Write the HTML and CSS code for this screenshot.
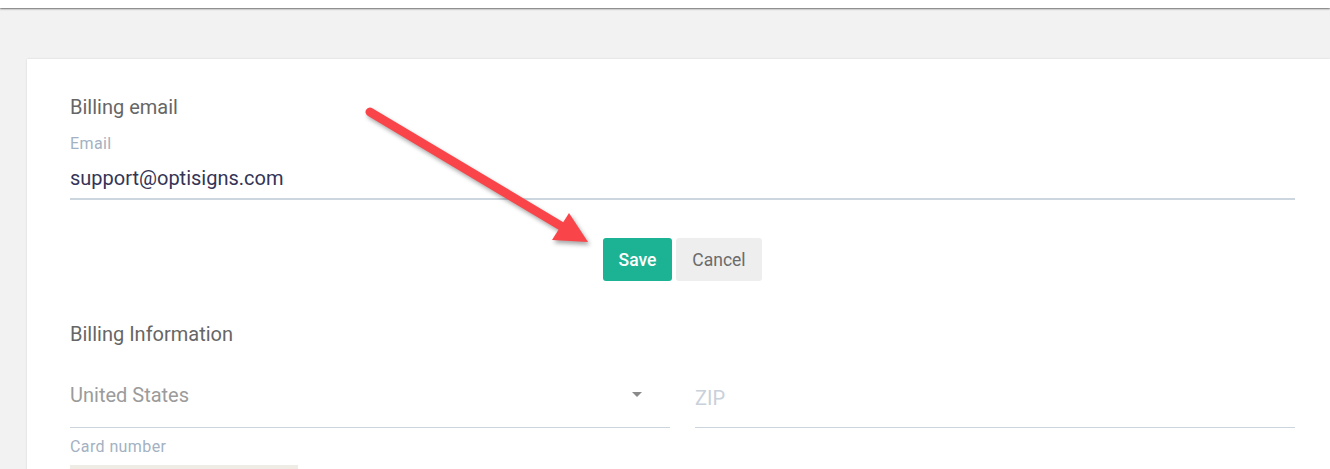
FILE: index.html
```html
<!DOCTYPE html>
<html>
<head>
<meta charset="utf-8">
<link rel="stylesheet" href="styles.css">
</head>
<body>
<header class="topbar"></header>
<main class="page">
  <section class="card">
    <h2 class="section-title">Billing email</h2>
    <div class="field">
      <label class="field-label">Email</label>
      <div class="field-value">support@optisigns.com</div>
    </div>
    <div class="actions">
      <button class="btn btn-save">Save</button>
      <button class="btn btn-cancel">Cancel</button>
    </div>
    <h2 class="section-title info-title">Billing Information</h2>
    <div class="row">
      <div class="select">
        <span class="select-text">United States</span>
        <span class="caret"></span>
      </div>
      <div class="zip">ZIP</div>
    </div>
    <label class="field-label card-label">Card number</label>
    <div class="card-input"></div>
  </section>
</main>
<svg class="annotation" width="1330" height="469" viewBox="0 0 1330 469">
  <g class="arrow">
    <line x1="370" y1="112" x2="566" y2="229" stroke="#f9454a" stroke-width="9" stroke-linecap="round"/>
    <polygon points="588,242 569,213 552,240" fill="#f9454a"/>
  </g>
</svg>
</body>
</html>
```

FILE: styles.css
```css
* { box-sizing: border-box; }
html, body {
  margin: 0;
  padding: 0;
  height: 469px;
  overflow: hidden;
}
body {
  background: #f2f2f2;
  font-family: Roboto, "Liberation Sans", Arial, sans-serif;
  position: relative;
}
.topbar {
  height: 8px;
  background: #ffffff;
  box-shadow: 0 1px 2px rgba(0,0,0,0.55);
  position: relative;
  z-index: 1;
}
.page {
  padding: 51px 0 0 27px;
}
.card {
  background: #ffffff;
  box-shadow: 0 0 2px rgba(0,0,0,0.12);
  padding: 36px 35px 40px 43px;
  min-height: 500px;
}
.section-title {
  margin: 0;
  font-size: 20px;
  line-height: 24px;
  font-weight: 400;
  color: #666666;
}
.field {
  margin-top: 16px;
}
.field-label {
  display: block;
  font-size: 16px;
  letter-spacing: 0.4px;
  line-height: 18px;
  color: #a3b1c2;
}
.field-value {
  margin-top: 13px;
  font-size: 20px;
  line-height: 24px;
  color: #343456;
  padding-bottom: 8px;
  border-bottom: 2px solid #ccd6df;
}
.actions {
  display: flex;
  justify-content: center;
  gap: 4px;
  margin-top: 38px;
}
.btn {
  height: 43px;
  border: none;
  border-radius: 3px;
  font-family: inherit;
  font-size: 17.5px;
  padding: 0;
}
.btn-save {
  width: 69px;
  background: #1cb394;
  color: #ffffff;
  font-weight: 500;
}
.btn-cancel {
  width: 86px;
  background: #eeeeee;
  color: #6b6b6b;
}
.info-title {
  margin-top: 41px;
}
.row {
  display: grid;
  grid-template-columns: 1fr 1fr;
  gap: 25px;
  margin-top: 37px;
}
.select {
  display: flex;
  align-items: center;
  justify-content: space-between;
  height: 45px;
  padding-bottom: 20px;
  border-bottom: 1px solid #ccd5dd;
  font-size: 20px;
  line-height: 24px;
  color: #9b9b9b;
}
.caret {
  width: 0;
  height: 0;
  border-left: 5px solid transparent;
  border-right: 5px solid transparent;
  border-top: 5px solid #8a8a8a;
  margin-right: 28px;
  margin-top: -2px;
}
.zip {
  height: 45px;
  padding-top: 3px;
  border-bottom: 1px solid #ccd5dd;
  font-size: 20px;
  line-height: 24px;
  color: #c9d1da;
}
.card-label {
  margin-top: 10px;
}
.card-input {
  margin-top: 9px;
  width: 228px;
  height: 12px;
  background: #eeece4;
}
.annotation {
  position: absolute;
  left: 0;
  top: 0;
  pointer-events: none;
}
.arrow {
  filter: drop-shadow(2px 3px 2px rgba(0,0,0,0.35));
}
```
